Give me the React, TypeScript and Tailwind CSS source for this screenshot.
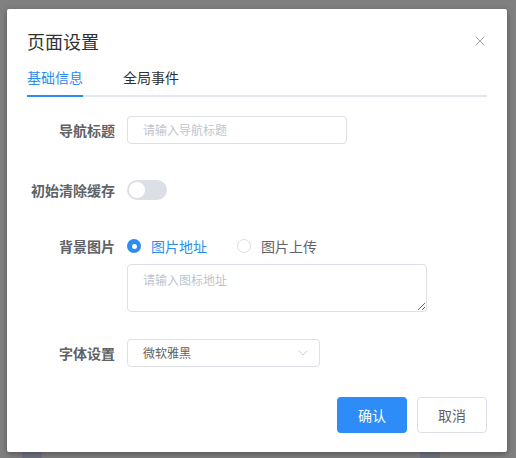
import { ChevronDown, X } from "lucide-react";

const font = { fontFamily: '"Noto Sans CJK SC", "Noto Sans", sans-serif' };

function Label({ children }: { children: string }) {
  return (
    <div className="w-[88px] shrink-0 text-right text-[14px] font-semibold text-[#606266] leading-5">
      {children}
    </div>
  );
}

export default function App() {
  return (
    <div className="w-full h-[458px] overflow-hidden bg-[#808080] pt-[9px] pl-[7px]" style={font}>
      <div className="relative w-[500px] h-[443px] bg-white rounded-[2px] shadow-[0_2px_6px_rgba(0,0,0,0.35)] px-5 pt-5">
        <div className="flex items-center justify-between">
          <h2 className="text-[18px] leading-6 text-[#303133]">页面设置</h2>
          <button className="-mr-[1px] text-[#909399]">
            <X className="w-4 h-4" strokeWidth={1.3} />
          </button>
        </div>

        <div className="mt-[14px] flex border-b-2 border-[#e4e7ed]">
          <div className="-mb-[2px] border-b-2 border-[#2d8cf0] pb-2 text-[14px] leading-5 text-[#2d8cf0]">
            基础信息
          </div>
          <div className="ml-10 pb-2 text-[14px] leading-5 text-[#303133]">全局事件</div>
        </div>

        <div className="mt-[19px] flex items-center">
          <Label>导航标题</Label>
          <div className="ml-3 flex h-7 w-[220px] items-center rounded border border-[#dcdfe6] px-[15px] text-[12px] text-[#c0c4cc]">
            请输入导航标题
          </div>
        </div>

        <div className="mt-9 flex items-center">
          <Label>初始清除缓存</Label>
          <div className="ml-3 flex h-5 w-10 items-center rounded-full bg-[#dcdfe6] px-[2px]">
            <div className="h-4 w-4 rounded-full bg-white" />
          </div>
        </div>

        <div className="mt-9 flex items-center">
          <Label>背景图片</Label>
          <div className="ml-3 flex items-center">
            <span className="flex h-[14px] w-[14px] items-center justify-center rounded-full bg-[#2d8cf0]">
              <span className="h-[5px] w-[5px] rounded-full bg-white" />
            </span>
            <span className="ml-[10px] text-[14px] leading-5 text-[#2d8cf0]">图片地址</span>
            <span className="ml-[30px] h-[14px] w-[14px] rounded-full border border-[#dcdfe6]" />
            <span className="ml-[10px] text-[14px] leading-5 text-[#606266]">图片上传</span>
          </div>
        </div>

        <div className="mt-2 pl-[100px]">
          <textarea
            className="block h-12 w-[300px] rounded border border-[#dcdfe6] px-[15px] pt-[5px] text-[12px] leading-5 text-[#606266] placeholder:text-[#c0c4cc] outline-none"
            placeholder="请输入图标地址"
          />
        </div>

        <div className="mt-[27px] flex items-center">
          <Label>字体设置</Label>
          <div className="ml-3 flex h-7 w-[193px] items-center justify-between rounded border border-[#dcdfe6] pl-[15px] pr-[8px] text-[12px] text-[#606266]">
            <span>微软雅黑</span>
            <ChevronDown className="h-4 w-4 text-[#c0c4cc]" strokeWidth={1.3} />
          </div>
        </div>

        <div className="mt-[30px] flex justify-end gap-[10px]">
          <button className="h-9 w-[70px] rounded bg-[#2d8cf8] text-[14px] text-white">确认</button>
          <button className="h-9 w-[70px] rounded border border-[#dcdfe6] bg-white text-[14px] text-[#606266]">
            取消
          </button>
        </div>
      </div>
      <div className="flex">
        <div className="ml-[15px] h-[6px] w-5 bg-[#70747f]" />
        <div className="ml-[378px] h-[6px] w-5 bg-[#70747f]" />
      </div>
    </div>
  );
}
